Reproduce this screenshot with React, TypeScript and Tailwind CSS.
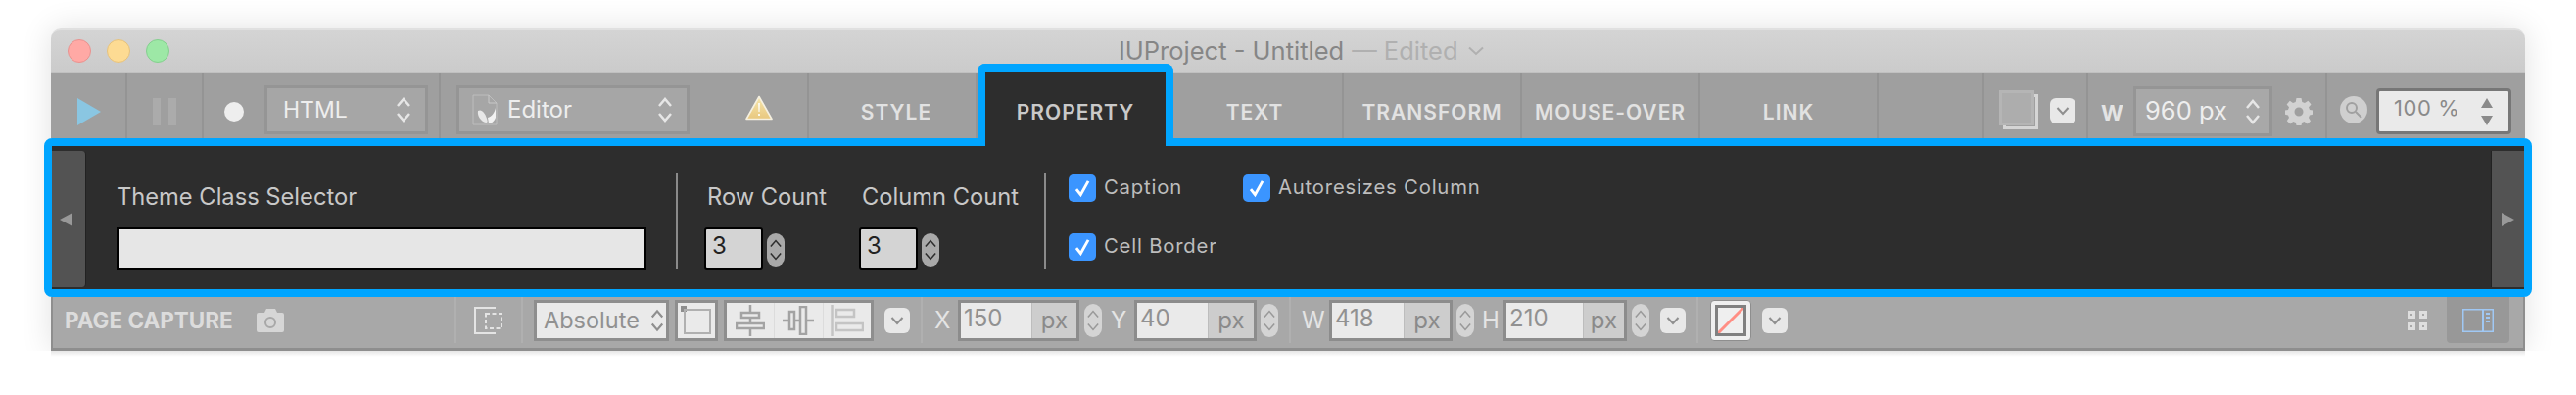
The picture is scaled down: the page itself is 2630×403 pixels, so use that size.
const sans = "font-['Inter','Liberation_Sans',sans-serif]";

function Chevrons({ className = "w-[16px] h-[28px]", color = "#e6e6e6", sw = 2.5 }: { className?: string; color?: string; sw?: number }) {
  return (
    <svg viewBox="0 0 16 28" className={`${className} shrink-0`} fill="none" stroke={color} strokeWidth={sw}>
      <path d="M2 10 L8 3 L14 10" />
      <path d="M2 18 L8 25 L14 18" />
    </svg>
  );
}

function ChevronButton() {
  return (
    <div className="w-[26px] h-[26px] shrink-0 rounded-[6px] bg-[#e8e8e8] flex items-center justify-center">
      <svg viewBox="0 0 14 10" className="w-[14px] h-[10px]" fill="none" stroke="#8f8f8f" strokeWidth={2}>
        <path d="M1.5 2 L7 8 L12.5 2" />
      </svg>
    </div>
  );
}

function Stepper() {
  return (
    <div className="w-[18px] h-[34px] shrink-0 rounded-full bg-[#d4d4d4] flex items-center justify-center">
      <Chevrons className="w-[14px] h-[24px]" color="#999999" sw={1.8} />
    </div>
  );
}

function UnitField({ value, width, pxWidth, className = "" }: { value: string; width: string; pxWidth: string; className?: string }) {
  return (
    <div className={`${width} ${className} h-[42px] shrink-0 border-[3px] border-[#8c8c8c] bg-[#eaeaea] flex text-[#919191] text-[24px]`}>
      <span className="flex-1 pl-[3px] leading-[32px]">{value}</span>
      <span className={`${pxWidth} bg-[#cdcdcd] border-l border-[#bdbdbd] text-center leading-[36px] text-[#8a8a8a]`}>px</span>
    </div>
  );
}

function Tab({ label, width, className = "" }: { label: string; width: string; className?: string }) {
  return (
    <div className={`${width} ${className} shrink-0 border-r-2 border-[#949494] pt-[14px] flex items-center justify-center text-[21px] font-semibold tracking-[1px] text-[#e2e2e2]`}>
      {label}
    </div>
  );
}

function CheckItem({ label, className = "" }: { label: string; className?: string }) {
  return (
    <div className={`flex items-start ${className}`}>
      <div className="w-[28px] h-[28px] rounded-[5px] bg-[#3b95ff] flex items-center justify-center shrink-0">
        <svg viewBox="0 0 20 20" className="w-[22px] h-[22px]" fill="none" stroke="#ffffff" strokeWidth={2.6}>
          <path d="M4.5 11 L8.5 16 L15.5 3.5" />
        </svg>
      </div>
      <span className="ml-[8px] text-[20.3px] leading-[26px] tracking-[0.8px] text-[#bdbdbd]">{label}</span>
    </div>
  );
}

function CountField({ label, className }: { label: string; className: string }) {
  return (
    <div className={`${className} shrink-0 pt-[37px]`}>
      <div className="pl-[3px] text-[23.7px] leading-[30px] text-[#c8c8c8] whitespace-nowrap">{label}</div>
      <div className="mt-[16px] flex items-start gap-[4px]">
        <div className="w-[60px] h-[43px] rounded-[3px] border-2 border-black bg-[#d4d4d4] pl-[6px] text-[24px] leading-[34px] text-[#222222]">3</div>
        <div className="w-[18px] h-[34px] mt-[6px] rounded-full bg-[#a9a9a9] flex items-center justify-center">
          <Chevrons className="w-[14px] h-[24px]" color="#2d2d2d" sw={1.8} />
        </div>
      </div>
    </div>
  );
}

export default function App() {
  return (
    <div className={`${sans} w-[2630px] h-[403px] bg-white overflow-hidden`}>
      <div className="h-[358px] overflow-hidden pt-[29px] pl-[52px]">
        <div className="w-[2526px] h-[329px] rounded-t-[10px] shadow-[0_0_32px_rgba(0,0,0,0.12)]">
          {/* Title bar */}
          <div className="relative h-[45px] rounded-t-[10px] border-t-2 border-[#e0e0e0] bg-gradient-to-b from-[#d4d4d4] to-[#cbcbcb] border-b border-b-[#c0c0c0] flex items-center">
            <div className="flex items-center gap-[16px] ml-[17px]">
              <div className="w-[24px] h-[24px] rounded-full bg-[#ffa9a5] border border-[#e89390]" />
              <div className="w-[24px] h-[24px] rounded-full bg-[#fddb93] border border-[#e6c27e]" />
              <div className="w-[24px] h-[24px] rounded-full bg-[#9de8a6] border border-[#85cf8f]" />
            </div>
            <div className="ml-[969px] flex items-center text-[25.5px] whitespace-nowrap text-[#868686]">
              IUProject - Untitled
              <span className="ml-[8px] text-[#b0b0b0]">— Edited</span>
              <svg viewBox="0 0 16 10" className="w-[16px] h-[10px] ml-[10px]" fill="none" stroke="#b0b0b0" strokeWidth={2}>
                <path d="M1 1.5 L8 8 L15 1.5" />
              </svg>
            </div>
          </div>

          {/* Top toolbar */}
          <div className="h-[67px] bg-[#9f9f9f] flex">
            <div className="w-[78px] shrink-0 border-r-2 border-[#949494] flex items-center justify-center pt-[13px] pl-[2px]">
              <svg viewBox="0 0 24 28" className="w-[24px] h-[28px]"><path d="M0 0 L24 14 L0 28 Z" fill="#8ac6e2" /></svg>
            </div>
            <div className="w-[78px] shrink-0 border-r-2 border-[#949494] flex items-center justify-center gap-[8px] pt-[13px]">
              <div className="w-[8px] h-[28px] bg-[#ababab]" />
              <div className="w-[8px] h-[28px] bg-[#ababab]" />
            </div>
            <div className="w-[242px] shrink-0 border-r-2 border-[#949494] flex items-start pl-[21px]">
              <div className="w-[20px] h-[20px] mt-[30px] rounded-full bg-[#eeeeee]" />
              <div className="ml-[21px] mt-[13px] w-[167px] h-[50px] border-[3px] border-[#959595] bg-[#a6a6a6] flex items-center justify-between pl-[16px] pr-[14px] text-[23px] text-[#eeeeee]">
                HTML
                <Chevrons />
              </div>
            </div>
            <div className="w-[376px] shrink-0 border-r-2 border-[#949494] flex items-start pl-[16px]">
              <div className="mt-[13px] w-[238px] h-[50px] border-[3px] border-[#959595] bg-[#a6a6a6] flex items-center pl-[13px] pr-[14px] text-[24px] text-[#eeeeee]">
                <svg viewBox="0 0 26 32" className="w-[26px] h-[32px] shrink-0">
                  <path d="M1 1 H17 L25 9 V31 H1 Z" fill="#a6a6a6" stroke="#bdbdbd" strokeWidth={1} />
                  <path d="M17 1 V9 H25" fill="none" stroke="#c8c8c8" strokeWidth={1} />
                  <path d="M6 17 C10 15 13 19 15 25 C16 28 16 29 14 29 C9 28 5 22 6 17 Z" fill="#e8e8e8" />
                  <path d="M24 14 C23 19 20 23 16 24 L17 30 C20 30 23 27 24 24 Z" fill="#f2f2f2" />
                </svg>
                <span className="ml-[10px]">Editor</span>
                <Chevrons className="w-[16px] h-[28px] ml-auto" />
              </div>
              <svg viewBox="0 0 28 26" className="w-[28px] h-[26px] ml-[57px] mt-[23px]">
                <defs>
                  <linearGradient id="warn" x1="0" y1="0" x2="0" y2="1">
                    <stop offset="0" stopColor="#f6e6ad" />
                    <stop offset="1" stopColor="#e8c77e" />
                  </linearGradient>
                </defs>
                <path d="M14 1.5 L27 24.5 H1 Z" fill="url(#warn)" stroke="#f5f0e0" strokeWidth={1.6} strokeLinejoin="round" />
                <path d="M13 8 H15 L14.6 17 H13.4 Z M13 19 H15 V21 H13 Z" fill="#fbf8ec" />
              </svg>
            </div>
            <Tab label="STYLE" width="w-[172px]" className="pl-[8px]" />
            <div className="relative z-10 w-[200px] shrink-0">
              <div className="absolute inset-x-0 -top-[9px] -bottom-[8px] rounded-t-[8px] border-[8px] border-b-0 border-[#00a5ff] bg-[#2d2d2d] flex items-center justify-center pt-[7px] text-[21px] font-semibold tracking-[1px] text-[#c9c9c9]">
                PROPERTY
              </div>
            </div>
            <Tab label="TEXT" width="w-[174px]" className="pr-[6px]" />
            <Tab label="TRANSFORM" width="w-[182px]" />
            <Tab label="MOUSE-OVER" width="w-[182px]" />
            <Tab label="LINK" width="w-[182px]" />
            <div className="w-[108px] shrink-0 border-r-2 border-[#949494]" />
            <div className="w-[106px] shrink-0 border-r-2 border-[#949494] flex items-start pl-[15px]">
              <div className="relative w-[40px] h-[40px] mt-[18px]">
                <div className="absolute right-0 bottom-0 w-[36px] h-[36px] border-[3px] border-[#d5d5d5]" />
                <div className="absolute left-0 top-0 w-[36px] h-[36px] bg-[#adadad] border-[3px] border-[#b5b5b5]" />
              </div>
              <div className="ml-[12px] mt-[26px]"><ChevronButton /></div>
            </div>
            <div className="w-[244px] shrink-0 border-r-2 border-[#949494] flex items-start pl-[13px]">
              <span className="w-[23px] mt-[28px] text-[22px] leading-[26px] font-bold text-[#e4e4e4]">W</span>
              <div className="ml-[10px] mt-[14px] w-[142px] h-[51px] border-[3px] border-[#959595] bg-[#a8a8a8] flex items-center pl-[9px] pr-[9px] text-[25.5px] text-[#eeeeee]">
                960 px
                <Chevrons className="w-[16px] h-[28px] ml-auto" />
              </div>
              <svg viewBox="0 0 28 28" className="w-[28px] h-[28px] ml-[13px] mt-[26px]" fill="#d2d2d2">
                <path fillRule="evenodd" d="M11.5 0 H16.5 L17.3 4 L20 5.1 L23.4 2.8 L26.5 6.4 L24 9.2 L25 12 L28 12.6 V16.8 L25 17.4 L24 20 L26 23.4 L22.8 26.4 L19.6 24 L17.2 25 L16.5 28 H11.5 L10.8 25 L8.2 24 L5.2 26.4 L1.8 23.2 L4 20 L3 17.4 L0 16.8 V12.6 L3 12 L4 9.2 L1.6 6.4 L4.8 2.8 L8 5.1 L10.7 4 Z M14 9.5 A4.5 4.5 0 1 0 14 18.5 A4.5 4.5 0 1 0 14 9.5 Z" />
              </svg>
            </div>
            <div className="w-[201px] shrink-0 flex items-start pl-[13px]">
              <div className="w-[28px] h-[28px] mt-[24px] rounded-full bg-[#cfcfcf] flex items-center justify-center">
                <svg viewBox="0 0 18 18" className="w-[18px] h-[18px]" fill="none" stroke="#a0a0a0" strokeWidth={2}>
                  <circle cx="7" cy="7" r="5" />
                  <path d="M11 11 L17 17" />
                </svg>
              </div>
              <div className="ml-[9px] mt-[16px] w-[138px] h-[47px] rounded-[4px] border-[3px] border-[#777777] bg-[#eaeaea] flex items-center pl-[15px] pr-[16px] text-[22px] tracking-[0.6px] text-[#8a8a8a]">
                <span className="-mt-[6px]">100 %</span>
                <svg viewBox="0 0 12 30" className="w-[12px] h-[30px] ml-auto">
                  <path d="M6 1 L12 11 H0 Z M0 19 H12 L6 29 Z" fill="#8a8a8a" />
                </svg>
              </div>
            </div>
          </div>

          {/* Blue highlighted property panel */}
          <div className="relative -mx-[7px] h-[162px] rounded-[8px] border-[8px] border-[#00a5ff] bg-[#2d2d2d] flex">
            <div className="w-[35px] h-[139px] mt-[5px] shrink-0 rounded-r-[4px] bg-[#535353] border-r border-[#222222] flex items-center justify-center">
              <svg viewBox="0 0 13 14" className="w-[13px] h-[14px] -ml-[6px]"><path d="M13 0 V14 L0 7 Z" fill="#999999" /></svg>
            </div>
            <div className="ml-[31px] w-[541px] shrink-0 pt-[37px]">
              <div className="text-[23.7px] leading-[30px] text-[#c8c8c8]">Theme Class Selector</div>
              <div className="mt-[16px] h-[43px] border-2 border-black bg-[#e6e6e6]" />
            </div>
            <div className="ml-[30px] mt-[27px] w-[2px] h-[98px] bg-[#8a8a8a] shrink-0" />
            <CountField label="Row Count" className="ml-[27px] w-[158px]" />
            <CountField label="Column Count" className="w-[189px]" />
            <div className="mt-[27px] w-[2px] h-[98px] bg-[#8a8a8a] shrink-0" />
            <div className="ml-[23px] pt-[29px] flex flex-col gap-[32px]">
              <div className="flex">
                <CheckItem label="Caption" className="w-[178px]" />
                <CheckItem label="Autoresizes Column" />
              </div>
              <CheckItem label="Cell Border" />
            </div>
            <div className="ml-auto w-[34px] h-[139px] mt-[5px] shrink-0 bg-[#535353] border-l border-[#222222] flex items-center justify-center">
              <svg viewBox="0 0 13 14" className="w-[13px] h-[14px]"><path d="M0 0 V14 L13 7 Z" fill="#999999" /></svg>
            </div>
          </div>

          {/* Bottom bar */}
          <div className="h-[55px] bg-[#a8a8a8] border-x-2 border-b-[3px] border-[#8e8e8e]">
            <div className="h-[47px] flex items-center -mx-[2px]">
              <div className="w-[414px] h-full shrink-0 border-r-2 border-[#b0b0b0] flex items-center pl-[14px]">
                <span className="text-[22.5px] font-bold text-[#dcdcdc] whitespace-nowrap">PAGE CAPTURE</span>
                <svg viewBox="0 0 28 24" className="w-[28px] h-[24px] ml-[24px]">
                  <path fillRule="evenodd" d="M2 4 H8 L10 0 H19 L21 4 H26 Q28 4 28 6 V22 Q28 24 26 24 H2 Q0 24 0 22 V6 Q0 4 2 4 Z M14 8 A6 6 0 1 0 14 20 A6 6 0 1 0 14 8 Z M14 10 A4 4 0 1 1 14 18 A4 4 0 1 1 14 10 Z" fill="#d6d6d6" />
                </svg>
              </div>
              <div className="w-[68px] h-full shrink-0 border-r-2 border-[#b0b0b0] flex items-center justify-center">
                <svg viewBox="0 0 30 28" className="w-[30px] h-[28px]" fill="none" stroke="#e4e4e4" strokeWidth={2}>
                  <path d="M22 1 H1 V27 H22" />
                  <path d="M12 7 H28 V22 H12 Z" strokeDasharray="4 2.5" />
                </svg>
              </div>
              <div className="w-[408px] h-full shrink-0 border-r-2 border-[#b0b0b0] flex items-center pl-[11px]">
                <div className="w-[138px] h-[42px] shrink-0 border-[3px] border-[#8e8e8e] bg-[#eaeaea] flex items-center pl-[7px] pr-[2px] text-[23.5px] text-[#919191]">
                  Absolute
                  <Chevrons className="w-[14px] h-[26px] ml-auto" color="#8f8f8f" />
                </div>
                <div className="relative ml-[6px] w-[44px] h-[42px] shrink-0 border-[3px] border-[#8e8e8e] bg-[#eaeaea]">
                  <div className="absolute left-[3px] top-[3px] w-[6px] h-[6px] bg-[#8e8e8e]" />
                  <div className="absolute left-[6px] top-[6px] w-[28px] h-[26px] border-2 border-[#b0b0b0]" />
                </div>
                <div className="ml-[6px] w-[153px] h-[42px] shrink-0 border-[3px] border-[#8e8e8e] bg-[#eaeaea] flex">
                  <div className="flex-1 border-r border-[#dcdcdc] flex items-center justify-center">
                    <svg viewBox="0 0 30 32" className="w-[30px] h-[32px]" fill="none" stroke="#a3a3a3" strokeWidth={2.5}>
                      <path d="M15 0 V8 M15 13 V19 M15 24 V32" />
                      <rect x="6" y="8" width="18" height="5" />
                      <rect x="1" y="19" width="28" height="5" />
                    </svg>
                  </div>
                  <div className="flex-1 border-r border-[#dcdcdc] flex items-center justify-center">
                    <svg viewBox="0 0 32 30" className="w-[32px] h-[30px]" fill="none" stroke="#a3a3a3" strokeWidth={2.5}>
                      <path d="M0 15 H7 M12 15 H18 M24 15 H32" />
                      <rect x="7" y="6" width="5" height="18" />
                      <rect x="18" y="1" width="6" height="28" />
                    </svg>
                  </div>
                  <div className="flex-1 flex items-center justify-center">
                    <svg viewBox="0 0 34 32" className="w-[34px] h-[32px]" fill="none" stroke="#c4c4c4" strokeWidth={2.5}>
                      <path d="M1.5 0 V32" />
                      <rect x="6" y="5" width="18" height="7" />
                      <rect x="6" y="19" width="27" height="7" />
                    </svg>
                  </div>
                </div>
                <div className="ml-[11px]"><ChevronButton /></div>
              </div>
              <div className="w-[376px] h-full shrink-0 border-r-2 border-[#b0b0b0] flex items-center pl-[12px]">
                <span className="w-[16px] text-[24px] text-[#e4e4e4]">X</span>
                <UnitField value="150" width="w-[124px]" pxWidth="w-[46px]" className="ml-[8px]" />
                <div className="ml-[5px]"><Stepper /></div>
                <span className="ml-[9px] w-[14px] text-[24px] text-[#e4e4e4]">Y</span>
                <UnitField value="40" width="w-[125px]" pxWidth="w-[47px]" className="ml-[10px]" />
                <div className="ml-[4px]"><Stepper /></div>
              </div>
              <div className="w-[416px] h-full shrink-0 border-r-2 border-[#b0b0b0] flex items-center pl-[11px]">
                <span className="w-[21px] text-[24px] text-[#e4e4e4]">W</span>
                <UnitField value="418" width="w-[126px]" pxWidth="w-[47px]" className="ml-[7px]" />
                <div className="ml-[4px]"><Stepper /></div>
                <span className="ml-[8px] w-[16px] text-[24px] text-[#e4e4e4]">H</span>
                <UnitField value="210" width="w-[126px]" pxWidth="w-[42px]" className="ml-[6px]" />
                <div className="ml-[5px]"><Stepper /></div>
                <div className="ml-[11px]"><ChevronButton /></div>
              </div>
              <div className="flex-1 h-full flex items-center pl-[12px]">
                <div className="w-[42px] h-[42px] shrink-0 rounded-[4px] bg-[#efefef] border border-[#8e8e8e] flex items-center justify-center">
                  <svg viewBox="0 0 32 32" className="w-[32px] h-[32px]">
                    <path d="M2 30 L30 2" stroke="#ff8e84" strokeWidth={3} />
                    <rect x="1.5" y="1.5" width="29" height="29" fill="none" stroke="#808080" strokeWidth={3} />
                  </svg>
                </div>
                <div className="ml-[11px]"><ChevronButton /></div>
                <svg viewBox="0 0 20 20" className="w-[20px] h-[20px] ml-auto" fill="none" stroke="#dedede" strokeWidth={3}>
                  <rect x="1.5" y="1.5" width="5" height="5" />
                  <rect x="13.5" y="1.5" width="5" height="5" />
                  <rect x="1.5" y="13.5" width="5" height="5" />
                  <rect x="13.5" y="13.5" width="5" height="5" />
                </svg>
                <div className="ml-[20px] mr-[16px] w-[64px] h-full shrink-0 rounded-b-[4px] bg-[#989898] flex items-center justify-center">
                  <svg viewBox="0 0 32 24" className="w-[32px] h-[24px]" fill="none" stroke="#a0c8f4" strokeWidth={1.5}>
                    <rect x="0.75" y="0.75" width="30.5" height="22.5" />
                    <path d="M21 0 V24" strokeWidth={2} />
                    <path d="M24 5 H28 M24 9 H28 M24 13 H28" strokeWidth={2} />
                  </svg>
                </div>
              </div>
            </div>
          </div>
        </div>
      </div>
      <div className="ml-[52px] w-[2526px] h-[6px] bg-gradient-to-b from-black/10 to-transparent" />
    </div>
  );
}
